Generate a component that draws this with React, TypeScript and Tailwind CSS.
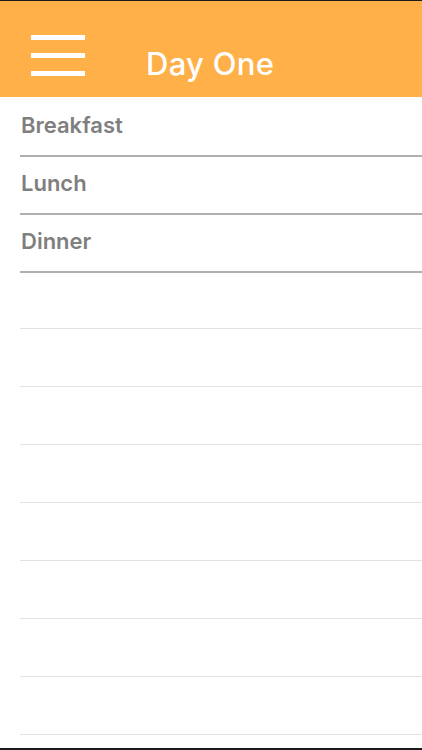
const meals = ['Breakfast', 'Lunch', 'Dinner']
const emptyRows = 8

function MenuIcon() {
  return (
    <div className="flex flex-col gap-[13px] w-[54px]">
      <span className="block h-[5px] bg-white" />
      <span className="block h-[5px] bg-white" />
      <span className="block h-[5px] bg-white" />
    </div>
  )
}

export default function App() {
  return (
    <div
      className="w-[422px] h-[750px] flex flex-col bg-white border-t border-[#1a1a1a] border-b-2 border-b-[#1a1a1a] overflow-hidden"
      style={{ fontFamily: 'Inter, "Liberation Sans", sans-serif' }}
    >
      <header className="h-[96px] shrink-0 bg-[#ffb048] flex items-start pl-[31px]">
        <div className="mt-[34px]">
          <MenuIcon />
        </div>
        <h1 className="ml-[61px] mt-[47px] text-[31px] leading-none font-medium text-white tracking-[0.3px]">
          Day One
        </h1>
      </header>

      <ul className="flex-1 pl-[20px] pt-[2px]">
        {meals.map((meal) => (
          <li
            key={meal}
            className="h-[58px] flex items-center border-b-2 border-[#b0b0b0] text-[22px] font-semibold text-[#7f7f7f] pl-[1px] pb-[3px]"
          >
            {meal}
          </li>
        ))}
        {Array.from({ length: emptyRows }).map((_, i) => (
          <li key={i} className={`${i === 0 ? 'h-[56px]' : 'h-[58px]'} border-b border-[#e2e2e2]`} />
        ))}
      </ul>
    </div>
  )
}
